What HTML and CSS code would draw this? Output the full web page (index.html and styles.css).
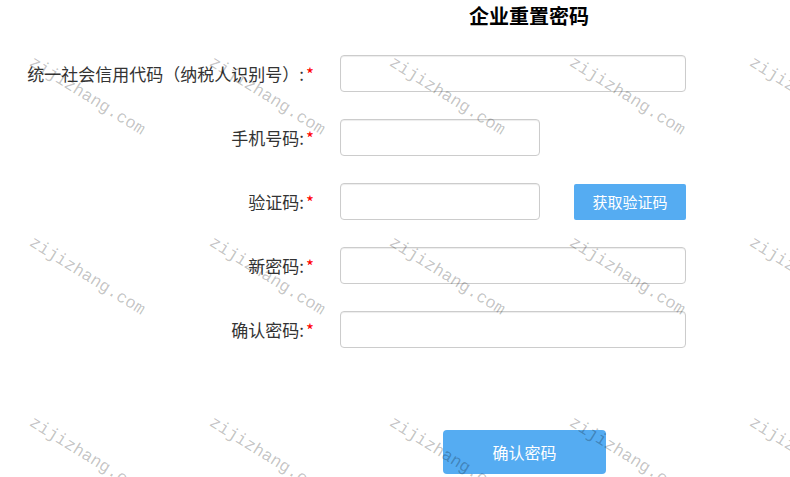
FILE: index.html
```html
<!DOCTYPE html>
<html lang="zh-CN">
<head>
<meta charset="utf-8">
<title>企业重置密码</title>
<link rel="stylesheet" href="styles.css">
</head>
<body>
<div class="page">
  <h1 class="title">企业重置密码</h1>

  <form class="reset-form">
    <div class="row">
      <label class="label">统一社会信用代码<span class="paren">（</span>纳税人识别号<span class="paren">）</span>:<span class="req">*</span></label>
      <input class="field field-wide" type="text">
    </div>
    <div class="row">
      <label class="label">手机号码:<span class="req">*</span></label>
      <input class="field field-short" type="text">
    </div>
    <div class="row">
      <label class="label">验证码:<span class="req">*</span></label>
      <input class="field field-short" type="text">
      <button class="btn btn-code" type="button">获取验证码</button>
    </div>
    <div class="row">
      <label class="label">新密码:<span class="req">*</span></label>
      <input class="field field-wide" type="password">
    </div>
    <div class="row">
      <label class="label">确认密码:<span class="req">*</span></label>
      <input class="field field-wide" type="password">
    </div>
  </form>

  <div class="actions">
    <button class="btn btn-submit" type="button">确认密码</button>
  </div>

  <div class="watermark" aria-hidden="true">
    <span class="wm">zijizhang.com</span><span class="wm">zijizhang.com</span><span class="wm">zijizhang.com</span><span class="wm">zijizhang.com</span><span class="wm">zijizhang.com</span>
    <span class="wm">zijizhang.com</span><span class="wm">zijizhang.com</span><span class="wm">zijizhang.com</span><span class="wm">zijizhang.com</span><span class="wm">zijizhang.com</span>
    <span class="wm">zijizhang.com</span><span class="wm">zijizhang.com</span><span class="wm">zijizhang.com</span><span class="wm">zijizhang.com</span><span class="wm">zijizhang.com</span>
  </div>
</div>
</body>
</html>
```

FILE: styles.css
```css
html, body {
  margin: 0;
  padding: 0;
  background: #fff;
}

body {
  font-family: "Noto Sans CJK SC", "Noto Sans", sans-serif;
  color: #333;
}

.page {
  position: relative;
  width: 790px;
  height: 477px;
  overflow: hidden;
}

.title {
  margin: 0;
  padding-left: 469px;
  font-size: 20px;
  font-weight: 700;
  line-height: 32px;
  color: #000;
}

.reset-form {
  margin-top: 23px;
  display: flex;
  flex-direction: column;
  gap: 27px;
}

.row {
  display: flex;
  align-items: center;
  height: 37px;
}

.label {
  width: 314px;
  flex: none;
  text-align: right;
  font-size: 17px;
  color: #333;
  white-space: nowrap;
}

/* full-width brackets keep their whole em box */
.paren {
  display: inline-block;
  width: 1em;
  text-align: center;
}

.req {
  color: #f00;
  margin-left: 2px;
}

.field {
  box-sizing: border-box;
  height: 37px;
  margin-left: 26px;
  padding: 6px 12px;
  border: 1px solid #ccc;
  border-radius: 4px;
  background: #fff;
  box-shadow: inset 0 1px 1px rgba(0, 0, 0, 0.075);
  font: inherit;
  font-size: 14px;
  outline: none;
}

.field-wide {
  width: 346px;
}

.field-short {
  width: 200px;
}

.btn {
  box-sizing: border-box;
  border: none;
  background: #55acf2;
  color: #fff;
  font-family: inherit;
  cursor: pointer;
}

.btn-code {
  margin-left: 34px;
  width: 112px;
  height: 36px;
  border-radius: 2px;
  font-size: 15px;
}

.actions {
  margin-top: 82px;
  padding-left: 443px;
}

.btn-submit {
  width: 163px;
  height: 44px;
  border-radius: 4px;
  font-size: 16px;
}

/* tiled diagonal site watermark laid over the form */
.watermark {
  position: absolute;
  inset: 0;
  pointer-events: none;
  display: grid;
  grid-template-columns: repeat(5, 180px);
  grid-auto-rows: 180px;
  padding: 53px 0 0 36px;
}

.wm {
  display: block;
  width: 0;
  white-space: nowrap;
  font-family: "Liberation Mono", "DejaVu Sans Mono", monospace;
  font-size: 17px;
  line-height: 19px;
  color: rgba(0, 0, 0, 0.24);
  transform: rotate(32deg);
  transform-origin: 0 0;
}
```
